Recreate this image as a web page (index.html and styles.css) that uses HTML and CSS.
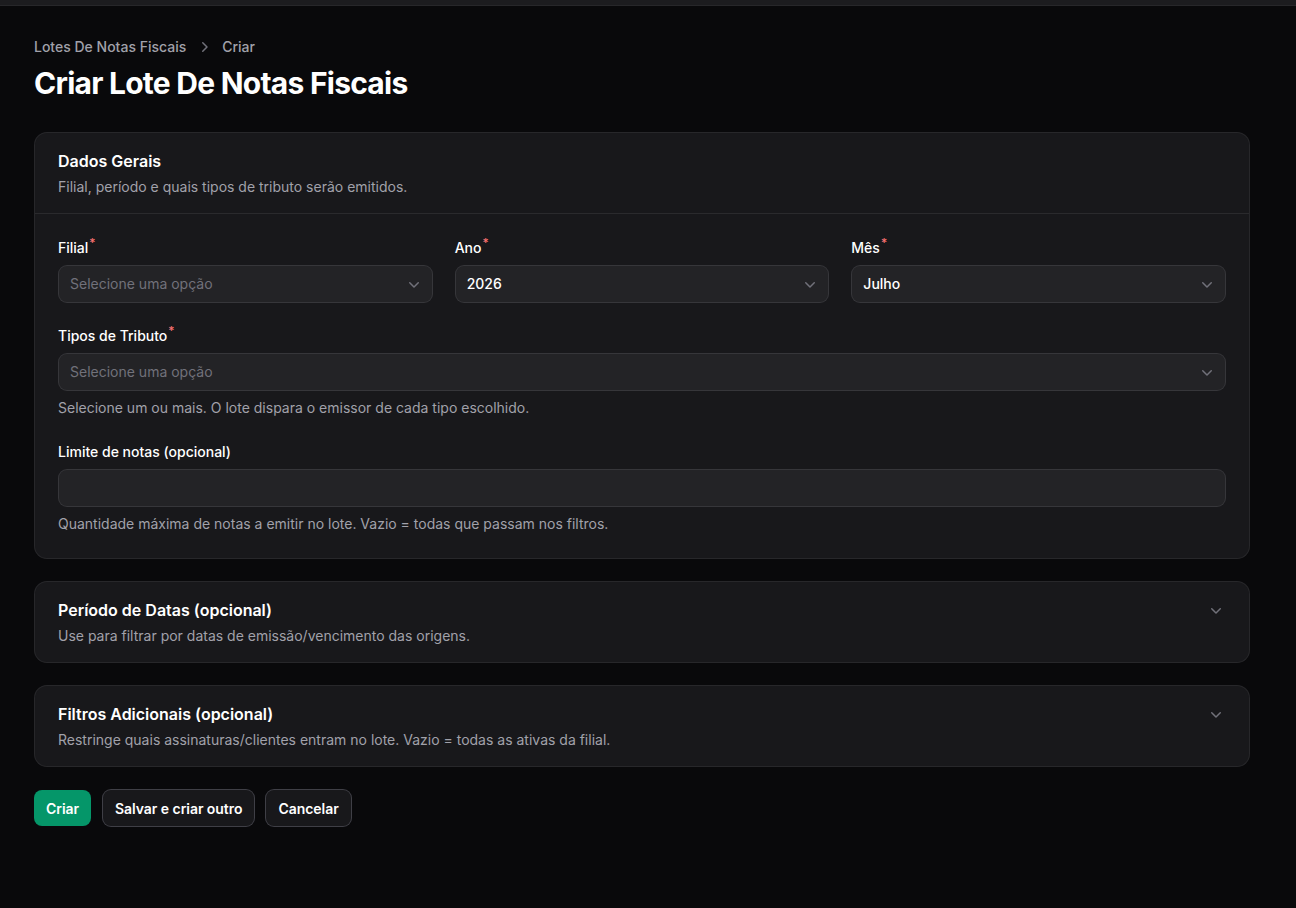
FILE: index.html
```html
<!DOCTYPE html>
<html lang="pt-BR">
  <head>
    <meta charset="UTF-8" />
    <meta name="viewport" content="width=device-width, initial-scale=1.0" />
    <title>Criar Lote De Notas Fiscais</title>
    <link rel="stylesheet" href="styles.css">
  </head>
  <body>
    <div class="topbar"></div>

    <main class="page">
      <nav class="breadcrumbs">
        <a href="#">Lotes De Notas Fiscais</a>
        <svg class="crumb-sep" viewBox="0 0 20 20" fill="currentColor"><path fill-rule="evenodd" d="M8.22 5.22a.75.75 0 0 1 1.06 0l4.25 4.25a.75.75 0 0 1 0 1.06l-4.25 4.25a.75.75 0 0 1-1.06-1.06L11.94 10 8.22 6.28a.75.75 0 0 1 0-1.06Z" clip-rule="evenodd"/></svg>
        <span>Criar</span>
      </nav>
      <h1 class="heading">Criar Lote De Notas Fiscais</h1>

      <form class="form">
        <section class="section">
          <header class="section-header">
            <h2>Dados Gerais</h2>
            <p>Filial, período e quais tipos de tributo serão emitidos.</p>
          </header>
          <div class="section-body">
            <div class="grid-3">
              <div class="field">
                <label>Filial<sup>*</sup></label>
                <div class="select placeholder">
                  <span>Selecione uma opção</span>
                  <svg viewBox="0 0 20 20" fill="currentColor"><path fill-rule="evenodd" d="M5.22 8.22a.75.75 0 0 1 1.06 0L10 11.94l3.72-3.72a.75.75 0 1 1 1.06 1.06l-4.25 4.25a.75.75 0 0 1-1.06 0L5.22 9.28a.75.75 0 0 1 0-1.06Z" clip-rule="evenodd"/></svg>
                </div>
              </div>
              <div class="field">
                <label>Ano<sup>*</sup></label>
                <div class="select">
                  <span>2026</span>
                  <svg viewBox="0 0 20 20" fill="currentColor"><path fill-rule="evenodd" d="M5.22 8.22a.75.75 0 0 1 1.06 0L10 11.94l3.72-3.72a.75.75 0 1 1 1.06 1.06l-4.25 4.25a.75.75 0 0 1-1.06 0L5.22 9.28a.75.75 0 0 1 0-1.06Z" clip-rule="evenodd"/></svg>
                </div>
              </div>
              <div class="field">
                <label>Mês<sup>*</sup></label>
                <div class="select">
                  <span>Julho</span>
                  <svg viewBox="0 0 20 20" fill="currentColor"><path fill-rule="evenodd" d="M5.22 8.22a.75.75 0 0 1 1.06 0L10 11.94l3.72-3.72a.75.75 0 1 1 1.06 1.06l-4.25 4.25a.75.75 0 0 1-1.06 0L5.22 9.28a.75.75 0 0 1 0-1.06Z" clip-rule="evenodd"/></svg>
                </div>
              </div>
            </div>

            <div class="field">
              <label>Tipos de Tributo<sup>*</sup></label>
              <div class="select placeholder">
                <span>Selecione uma opção</span>
                <svg viewBox="0 0 20 20" fill="currentColor"><path fill-rule="evenodd" d="M5.22 8.22a.75.75 0 0 1 1.06 0L10 11.94l3.72-3.72a.75.75 0 1 1 1.06 1.06l-4.25 4.25a.75.75 0 0 1-1.06 0L5.22 9.28a.75.75 0 0 1 0-1.06Z" clip-rule="evenodd"/></svg>
              </div>
              <p class="hint">Selecione um ou mais. O lote dispara o emissor de cada tipo escolhido.</p>
            </div>

            <div class="field">
              <label>Limite de notas (opcional)</label>
              <input type="text" class="input" />
              <p class="hint">Quantidade máxima de notas a emitir no lote. Vazio = todas que passam nos filtros.</p>
            </div>
          </div>
        </section>

        <section class="section collapsed">
          <header class="section-header">
            <div>
              <h2>Período de Datas (opcional)</h2>
              <p>Use para filtrar por datas de emissão/vencimento das origens.</p>
            </div>
            <svg class="toggle" viewBox="0 0 20 20" fill="currentColor"><path fill-rule="evenodd" d="M5.22 8.22a.75.75 0 0 1 1.06 0L10 11.94l3.72-3.72a.75.75 0 1 1 1.06 1.06l-4.25 4.25a.75.75 0 0 1-1.06 0L5.22 9.28a.75.75 0 0 1 0-1.06Z" clip-rule="evenodd"/></svg>
          </header>
        </section>

        <section class="section collapsed">
          <header class="section-header">
            <div>
              <h2>Filtros Adicionais (opcional)</h2>
              <p>Restringe quais assinaturas/clientes entram no lote. Vazio = todas as ativas da filial.</p>
            </div>
            <svg class="toggle" viewBox="0 0 20 20" fill="currentColor"><path fill-rule="evenodd" d="M5.22 8.22a.75.75 0 0 1 1.06 0L10 11.94l3.72-3.72a.75.75 0 1 1 1.06 1.06l-4.25 4.25a.75.75 0 0 1-1.06 0L5.22 9.28a.75.75 0 0 1 0-1.06Z" clip-rule="evenodd"/></svg>
          </header>
        </section>

        <div class="actions">
          <button type="button" class="btn btn-primary">Criar</button>
          <button type="button" class="btn btn-gray">Salvar e criar outro</button>
          <button type="button" class="btn btn-gray">Cancelar</button>
        </div>
      </form>
    </main>
  </body>
</html>
```

FILE: styles.css
```css
* {
  margin: 0;
  padding: 0;
  box-sizing: border-box;
}

body {
  font-family: 'Inter', 'Noto Sans', sans-serif;
  background: #09090b;
  color: #fff;
  min-height: 100vh;
  font-size: 14px;
  line-height: 20px;
}

.topbar {
  height: 6px;
  background: #1c1c1f;
  border-bottom: 1px solid #27272a;
}

.page {
  padding: 31px 47px 40px 35px;
}

.breadcrumbs {
  display: flex;
  align-items: center;
  gap: 8px;
  margin-left: -1px;
  font-weight: 500;
  color: #a1a1aa;
}

.breadcrumbs a {
  color: #a1a1aa;
  text-decoration: none;
}

.crumb-sep {
  width: 20px;
  height: 20px;
  color: #71717a;
}

.heading {
  margin-top: 8px;
  margin-left: -1px;
  font-size: 30px;
  line-height: 36px;
  font-weight: 700;
  letter-spacing: -0.75px;
}

.form {
  margin-top: 32px;
  display: flex;
  flex-direction: column;
  gap: 24px;
}

/* cards use an outer ring, like the rest of the inputs */
.section {
  background: #18181b;
  box-shadow: 0 0 0 1px #27272a;
  border-radius: 12px;
}

.section-header {
  padding: 16px 24px 16px 23px;
  display: flex;
  flex-direction: column;
  gap: 4px;
}

.section.collapsed .section-header {
  flex-direction: row;
  align-items: flex-start;
  justify-content: space-between;
}

.section.collapsed .section-header > div {
  display: flex;
  flex-direction: column;
  gap: 4px;
}

.section-header h2 {
  font-size: 16px;
  line-height: 24px;
  font-weight: 600;
}

.section-header p {
  color: #a1a1aa;
}

.toggle {
  width: 20px;
  height: 20px;
  color: #71717a;
  margin-top: 2px;
  margin-right: -1px;
}

.section-body {
  border-top: 1px solid #2a2a2d;
  padding: 24px;
  display: flex;
  flex-direction: column;
  gap: 24px;
}

.grid-3 {
  display: grid;
  grid-template-columns: repeat(3, 1fr);
  gap: 24px;
}

.field {
  display: flex;
  flex-direction: column;
  gap: 8px;
}

.field label {
  font-weight: 500;
  margin-left: -1px;
}

.field sup {
  color: #f87171;
  font-size: 12px;
  line-height: 0;
  margin-left: 1px;
  vertical-align: 6px;
}

.select,
.input {
  height: 36px;
  background: #232326;
  border: none;
  box-shadow: 0 0 0 1px #36363a;
  border-radius: 8px;
  padding: 0 8px 0 11px;
  display: flex;
  align-items: center;
  justify-content: space-between;
  color: #fff;
  font-family: inherit;
  font-size: 14px;
  font-weight: 500;
}

.select.placeholder {
  color: #71717a;
  font-weight: 400;
}

.select svg {
  width: 20px;
  height: 20px;
  color: #71717a;
}

.input {
  width: 100%;
  outline: none;
}

.hint {
  color: #a1a1aa;
  margin-left: -1px;
}

.actions {
  display: flex;
  gap: 12px;
  margin-left: -1px;
}

.btn {
  height: 36px;
  padding: 0 12px;
  border: none;
  border-radius: 8px;
  font-family: inherit;
  font-size: 14px;
  font-weight: 600;
  letter-spacing: -0.05px;
  color: #fff;
  cursor: pointer;
}

.btn-primary {
  background: #059669;
}

.btn-gray {
  background: #18181b;
  box-shadow: 0 0 0 1px #3f3f46;
}
```
